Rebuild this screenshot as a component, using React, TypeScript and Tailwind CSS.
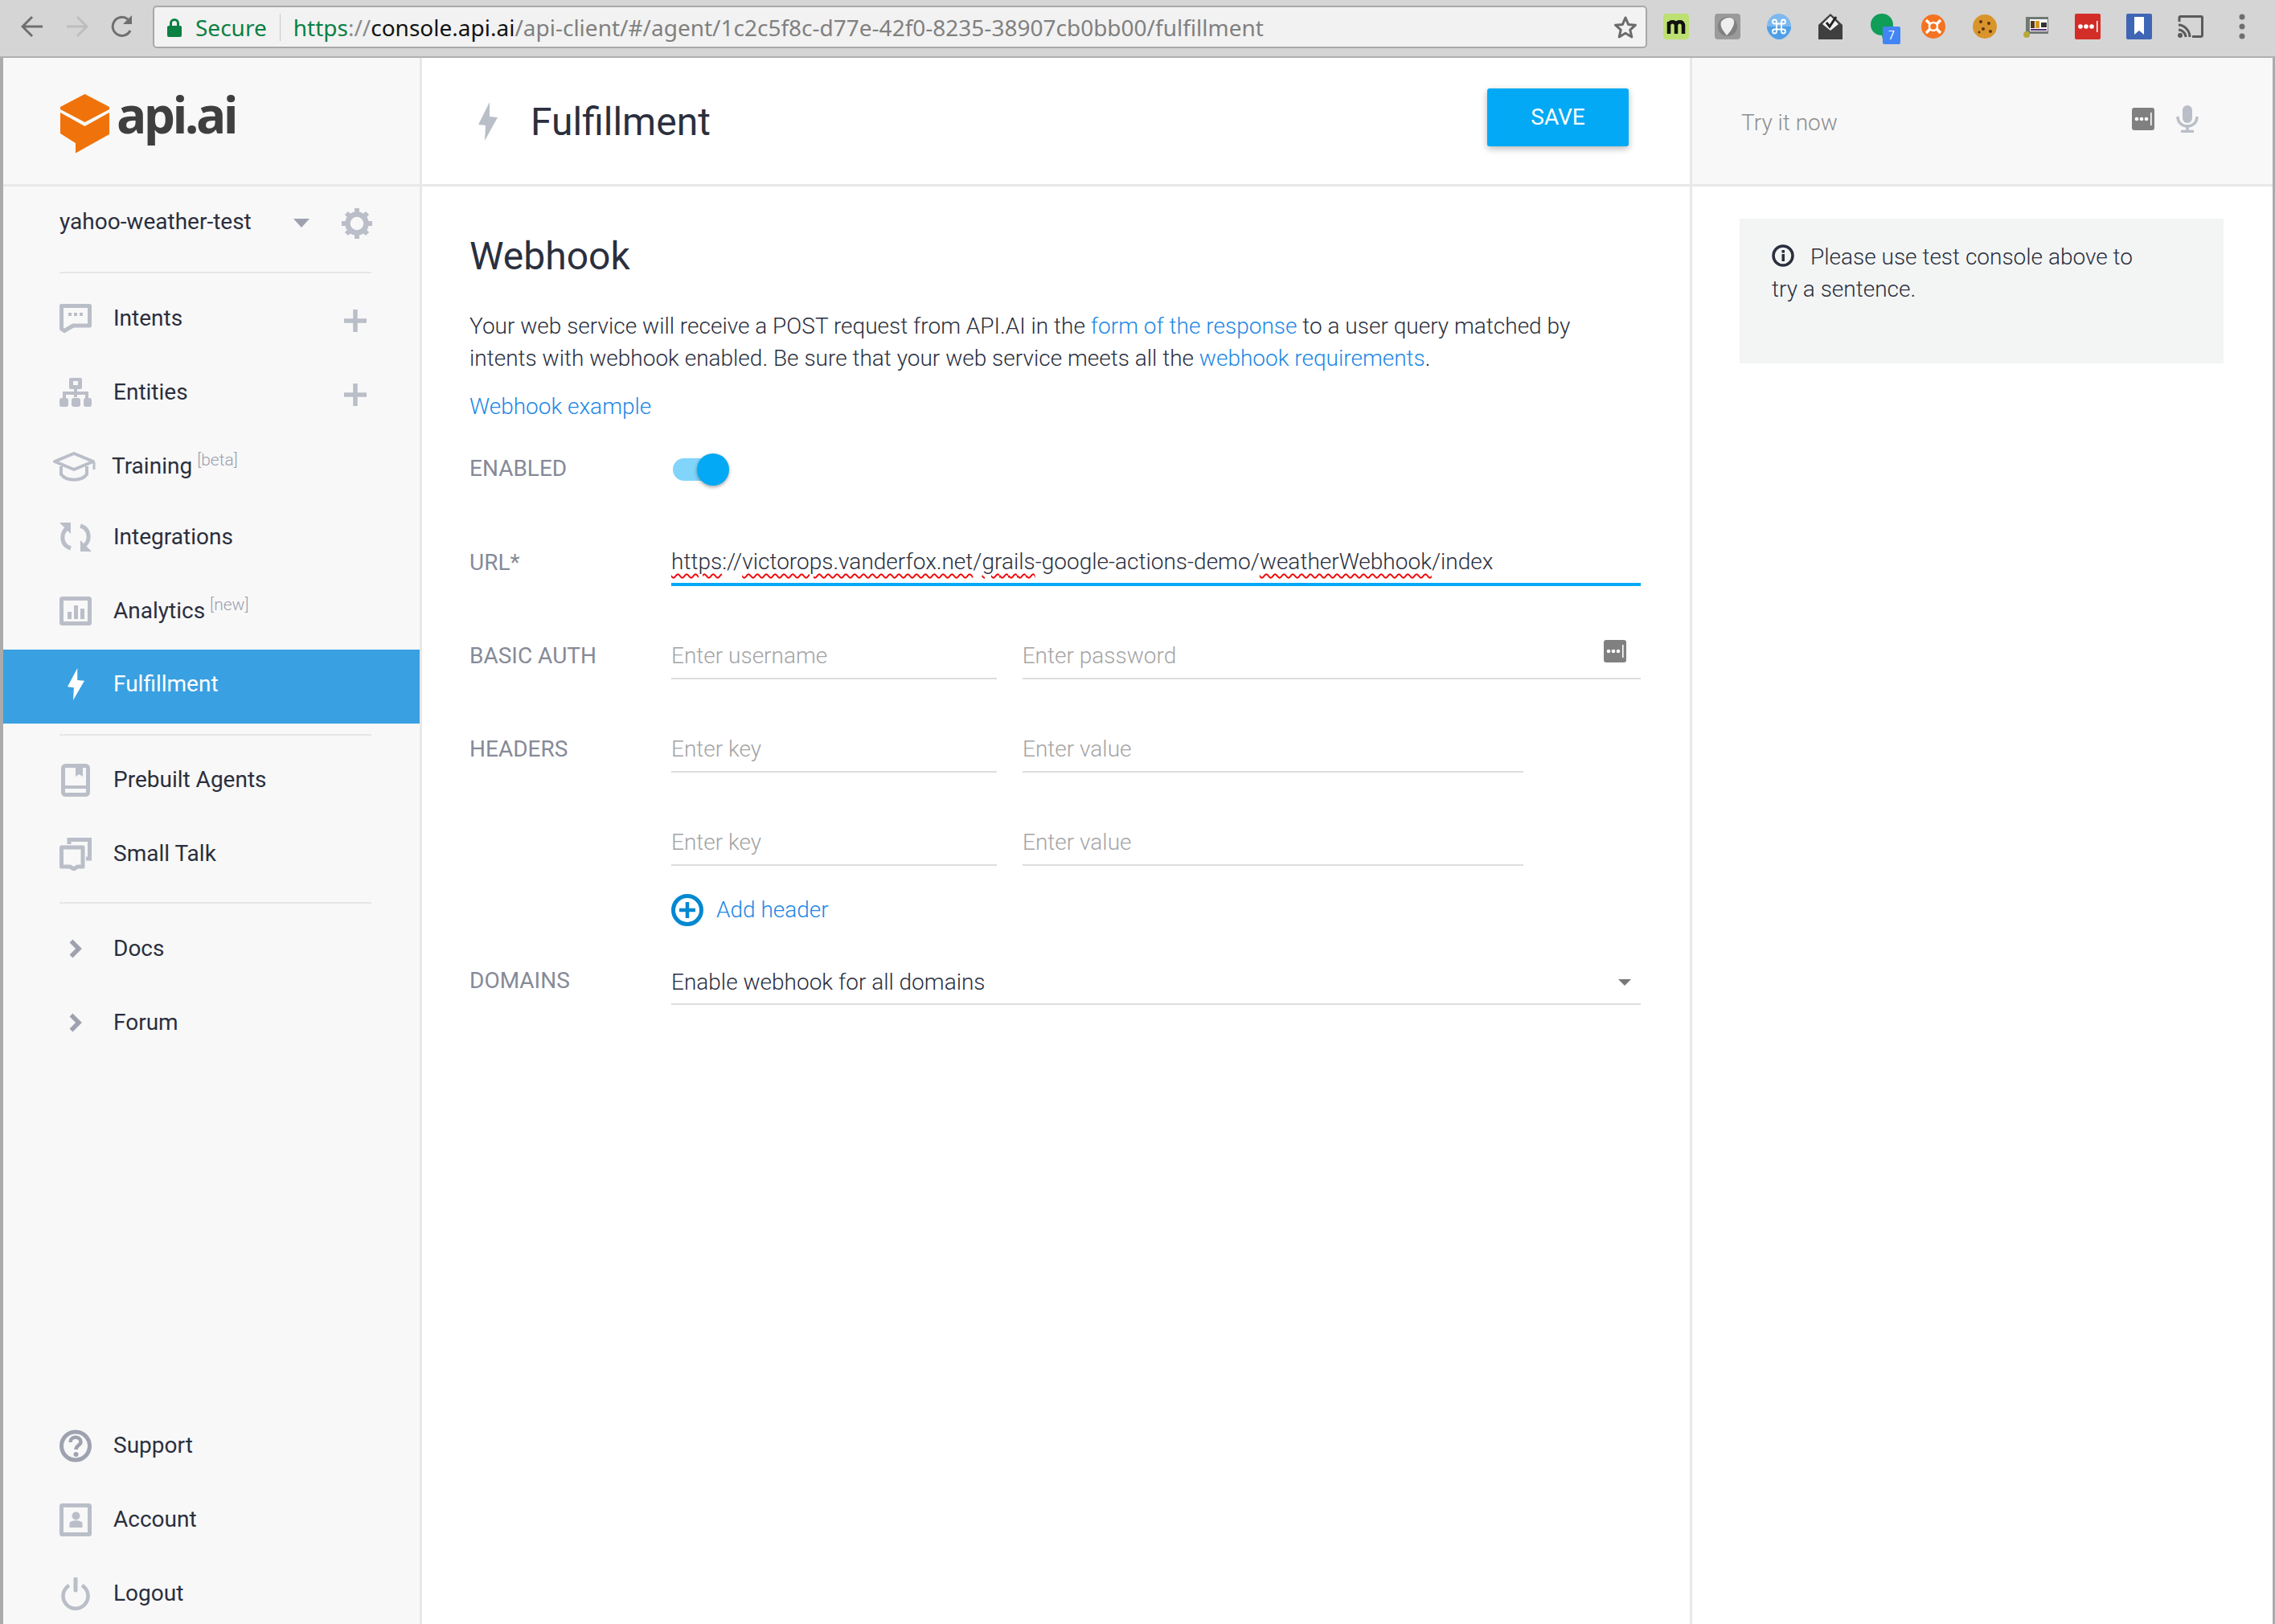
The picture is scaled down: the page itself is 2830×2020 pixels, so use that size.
import React from "react";

const ICON = "#babec8";
const Bolt = ({ c, w = 21, h = 40 }: { c: string; w?: number; h?: number }) => (
  <svg width={w} height={h} viewBox="0 0 24 48" preserveAspectRatio="none"><path d="M14 0 L0 28 L9 29 L8 48 L24 19 L14 18 Z" fill={c} /></svg>
);
const LastPass = ({ w, h }: { w: number; h: number }) => (
  <svg width={w} height={h} viewBox="0 0 28 28">
    <rect width="28" height="28" rx="3" fill="#808080" />
    <circle cx="6" cy="14" r="2.3" fill="#fff" /><circle cx="12" cy="14" r="2.3" fill="#fff" /><circle cx="18" cy="14" r="2.3" fill="#fff" />
    <rect x="23" y="6" width="1.6" height="16" fill="#fff" />
  </svg>
);
const Svg = ({ w = 40, h = 36, children }: { w?: number; h?: number; children: React.ReactNode }) => (
  <svg className="shrink-0" width={w} height={h} viewBox={`0 0 ${w} ${h}`} fill="none">{children}</svg>
);
const Icons: Record<string, React.ReactNode> = {
  intents: (
    <Svg>
      <path d="M2.5 2.5 H37.5 V27 H17 L6 33.5 L2.5 31 Z" stroke={ICON} strokeWidth="5" strokeLinejoin="round" />
      <rect x="11" y="11" width="4" height="4" fill={ICON} /><rect x="18" y="11" width="4" height="4" fill={ICON} /><rect x="25" y="11" width="4" height="4" fill={ICON} />
    </Svg>
  ),
  entities: (
    <Svg>
      <rect x="12" y="0" width="16" height="14" rx="2" fill={ICON} /><rect x="17" y="4" width="6" height="5" fill="#f8f8f8" />
      <path d="M20 12 V24 M6 26 V19 H34 V26" stroke={ICON} strokeWidth="4" />
      <rect x="0" y="25" width="11" height="11" rx="3" fill={ICON} /><rect x="15" y="25" width="11" height="11" rx="3" fill={ICON} /><rect x="30" y="25" width="10" height="11" rx="3" fill={ICON} />
    </Svg>
  ),
  training: (
    <Svg w={54} h={37}>
      <path d="M27 2 L51 12 L27 22 L3 12 Z" stroke={ICON} strokeWidth="4" strokeLinejoin="round" />
      <path d="M11 18 V28 C18 37 36 37 43 28 V18" stroke={ICON} strokeWidth="4" />
      <path d="M52 13 V22" stroke={ICON} strokeWidth="3" />
    </Svg>
  ),
  integrations: (
    <Svg>
      <path d="M11 6 C1 12 1 28 14 32 M29 30 C39 24 39 8 26 4" stroke={ICON} strokeWidth="5" />
      <path d="M0 0 H14 V14 Z M40 36 H26 V22 Z" fill={ICON} />
    </Svg>
  ),
  analytics: (
    <Svg>
      <rect x="2.5" y="2.5" width="35" height="31" rx="1" stroke={ICON} strokeWidth="5" />
      <rect x="10" y="19" width="5" height="9" fill={ICON} /><rect x="18" y="11" width="5" height="17" fill={ICON} /><rect x="26" y="15" width="5" height="13" fill={ICON} />
    </Svg>
  ),
  book: (
    <Svg w={36} h={41}>
      <rect x="2.5" y="2.5" width="31" height="36" rx="3" stroke={ICON} strokeWidth="5" />
      <path d="M18 2 H27 V16 L22.5 13 L18 16 Z" fill={ICON} />
      <rect x="3" y="27" width="30" height="4" fill={ICON} />
    </Svg>
  ),
  talk: (
    <Svg h={41}>
      <path d="M12 8 V2.5 H37.5 V26 H33" stroke={ICON} strokeWidth="5" />
      <path d="M2.5 12 H29 V36 H22 L18 39 L13 36 H2.5 Z" stroke={ICON} strokeWidth="5" strokeLinejoin="round" />
    </Svg>
  ),
  chev: (
    <Svg w={18} h={26}><path d="M3.5 3.5 L13 13 L3.5 22.5" stroke="#9ea2b0" strokeWidth="5.5" /></Svg>
  ),
  support: (
    <Svg h={41}>
      <circle cx="20" cy="20.5" r="17.5" stroke="#9ea2b0" strokeWidth="5" />
      <path d="M13.5 16 C13.5 7.5 26.5 8 26.5 15.5 C26.5 20 20.5 19.5 20.5 25" stroke="#9ea2b0" strokeWidth="4.5" />
      <circle cx="20.5" cy="31" r="3" fill="#9ea2b0" />
    </Svg>
  ),
  account: (
    <Svg h={41}>
      <rect x="2.5" y="2.5" width="35" height="36" rx="1" stroke={ICON} strokeWidth="5" />
      <circle cx="20.5" cy="15.5" r="5" fill={ICON} />
      <path d="M12.5 30 V25 C12.5 20 28.5 20 28.5 25 V30 Z" fill={ICON} />
    </Svg>
  ),
  logout: (
    <Svg w={36} h={41}>
      <path d="M10 10 A15.5 15.5 0 1 0 26 10" stroke={ICON} strokeWidth="4.5" />
      <path d="M18 2 V16" stroke={ICON} strokeWidth="5" strokeLinecap="round" />
    </Svg>
  ),
};

const Row = ({ icon, label, sup, plus, active, cls = "", shiftIcon }: { icon: React.ReactNode; label: string; sup?: string; plus?: boolean; active?: boolean; cls?: string; shiftIcon?: boolean }) => (
  <div className={`h-[92px] shrink-0 flex items-center pl-[70px] pr-[66px] ${active ? "bg-[#39a0e1] text-white" : "text-[#2b2f3e]"} ${cls}`}>
    <div className={`w-[67px] flex items-center shrink-0 ${shiftIcon ? "-ml-[2px]" : ""}`}>
      <div className="w-[40px] flex justify-center">{icon}</div>
    </div>
    <span className="text-[28px] leading-none">{label}</span>
    {sup && <span className="text-[21px] font-light text-[#9a9fad] ml-[6px] -mt-[14px]">{sup}</span>}
    {plus && (
      <svg className="ml-auto mt-[6px]" width="28" height="28" viewBox="0 0 28 28"><path d="M14 0 V28 M0 14 H28" stroke={ICON} strokeWidth="5.5" /></svg>
    )}
  </div>
);
const Divider = ({ cls }: { cls: string }) => <div className={`h-[2px] shrink-0 bg-[#e6e6e6] ml-[70px] w-[388px] ${cls}`} />;

const Label = ({ children, cls = "" }: { children: React.ReactNode; cls?: string }) => (
  <div className={`w-[251px] shrink-0 text-[28px] font-normal text-[#868a98] leading-none ${cls}`}>{children}</div>
);
const Field = ({ text, cls, children }: { text: string; cls: string; children?: React.ReactNode }) => (
  <div className={`h-[58px] pt-[2px] border-b-2 border-[#dddddd] flex items-center text-[28px] font-light text-[#a4a4a4] leading-none ${cls}`}>{text}{children}</div>
);
const Err = ({ children }: { children: React.ReactNode }) => (
  <span className="underline decoration-wavy decoration-[#f00000] decoration-[1.5px] underline-offset-[5px]">{children}</span>
);
const A = ({ children }: { children: React.ReactNode }) => <span className="text-[#1e88e5]">{children}</span>;

const Ext = ({ children, cls = "" }: { children: React.ReactNode; cls?: string }) => (
  <div className={`w-[64px] h-[40px] flex justify-center items-center shrink-0 ${cls}`}>{children}</div>
);

export default function App() {
  return (
    <div className="w-[2830px] h-[2020px] overflow-hidden flex flex-col bg-white font-['Roboto',sans-serif]">
      {/* browser toolbar */}
      <div className="h-[72px] shrink-0 bg-[#d5d5d5] border-b-2 border-[#b0b0b0] flex items-start pl-[4px]">
        <div className="flex items-center h-[70px] pb-[4px] pl-[22px] gap-[28px] w-[186px] shrink-0">
          <svg width="28" height="30" viewBox="0 0 28 30" fill="none"><path d="M27 15 H3 M14 3 L2 15 L14 27" stroke="#6f6f6f" strokeWidth="3" /></svg>
          <svg width="28" height="30" viewBox="0 0 28 30" fill="none"><path d="M1 15 H25 M14 3 L26 15 L14 27" stroke="#bdbdbd" strokeWidth="3" /></svg>
          <svg width="28" height="30" viewBox="0 0 28 30" fill="none"><path d="M24 20 A11.5 11.5 0 1 1 21 6" stroke="#6f6f6f" strokeWidth="3" /><path d="M26 1 V12 H15 Z" fill="#6f6f6f" /></svg>
        </div>
        <div className="mt-[7px] w-[1859px] h-[53px] shrink-0 bg-[#f2f2f2] border-2 border-[#a8a8a8] rounded-[5px] flex items-center pl-[16px] pr-[10px] font-['Noto_Sans',sans-serif] text-[28px] leading-none">
          <svg width="18" height="24" viewBox="0 0 18 24" fill="none"><path d="M4.5 11 V7 C4.5 1 13.5 1 13.5 7 V11" stroke="#0b8043" strokeWidth="3" /><rect x="0" y="10" width="18" height="14" rx="2" fill="#0b8043" /></svg>
          <span className="text-[#0b8043] ml-[17px]">Secure</span>
          <div className="w-[1px] h-[34px] bg-[#c8c8c8] mx-[16px]" />
          <span className="text-[#0b8043]">https</span>
          <span className="text-[#8a8a8a]">://</span>
          <span className="text-[#111]">console.api.ai</span>
          <span className="text-[#808080]">/api-client/#/agent/1c2c5f8c-d77e-42f0-8235-38907cb0bb00/fulfillment</span>
          <svg className="ml-auto" width="30" height="30" viewBox="0 0 30 30" fill="none"><path d="M15 3 L18.6 11.4 L27.5 12.2 L20.8 18.2 L22.8 27 L15 22.3 L7.2 27 L9.2 18.2 L2.5 12.2 L11.4 11.4 Z" stroke="#6a6a6a" strokeWidth="3" strokeLinejoin="round" /></svg>
        </div>
        <div className="flex items-center h-[70px] pb-[4px] pl-[4px]">
          <Ext>
            <svg width="32" height="32" viewBox="0 0 32 32"><rect width="32" height="32" rx="4" fill="#bde070" /><path d="M7 25 V10 M7 14 C8 9 15 9 16 14 V25 M16 14 C17 9 24 9 25 14 V25" stroke="#111" strokeWidth="4.5" fill="none" /></svg>
          </Ext>
          <Ext>
            <svg width="32" height="32" viewBox="0 0 32 32"><rect width="32" height="32" rx="4" fill="#9a9a9a" /><circle cx="16" cy="16" r="12" fill="#808080" /><path d="M8 10 C14 2 26 4 24 12 C23 18 18 24 15 27 C11 22 6 16 8 10 Z" fill="#eeeeee" /></svg>
          </Ext>
          <Ext>
            <svg width="30" height="32" viewBox="0 0 30 32"><ellipse cx="15" cy="16" rx="15" ry="16" fill="#7db9ee" /><path d="M0 16 H30 V18 C28 26 20 32 15 32 C10 32 2 26 0 18 Z" fill="#4f9fe6" /><path d="M12 13 V10 a2.5 2.5 0 1 0 -2.5 2.5 H20.5 a2.5 2.5 0 1 0 -2.5 -2.5 V22 a2.5 2.5 0 1 0 2.5 -2.5 H9.5 a2.5 2.5 0 1 0 2.5 2.5 Z" stroke="#fff" strokeWidth="1.8" fill="none" /></svg>
          </Ext>
          <Ext>
            <svg width="30" height="32" viewBox="0 0 30 32"><path d="M0 14 L15 0 L30 14 V32 H0 Z" fill="#3f3f3f" /><path d="M5 13 L15 3 L25 13 L15 21 Z" fill="#f1f1f1" /><path d="M10 11 L14 16 L22 4" stroke="#222" strokeWidth="3" fill="none" /></svg>
          </Ext>
          <Ext cls="relative">
            <svg width="28" height="32" viewBox="0 0 28 32"><path d="M14 0 C6 0 0 6 0 14 C0 21 6 27 14 27 L15 32 L20 27 C25 24 28 20 28 14 C28 6 22 0 14 0 Z" fill="#0f9d58" /></svg>
            <span className="absolute left-[33px] top-[20px] w-[22px] h-[22px] bg-[#4285f4] rounded-[2px] text-white text-[14px] leading-[22px] text-center">7</span>
          </Ext>
          <Ext>
            <svg width="30" height="30" viewBox="0 0 30 30"><circle cx="15" cy="15" r="15" fill="#f47321" /><circle cx="15" cy="15" r="5" fill="none" stroke="#fff" strokeWidth="2.5" /><path d="M6 7 L11 12 M24 7 L19 12 M6 23 L11 18 M24 23 L19 18" stroke="#fff" strokeWidth="3.5" /></svg>
          </Ext>
          <Ext>
            <svg width="30" height="30" viewBox="0 0 30 30"><circle cx="15" cy="15" r="15" fill="#d9952c" /><circle cx="10" cy="9" r="2" fill="#5a3416" /><circle cx="20" cy="11" r="2" fill="#5a3416" /><circle cx="13" cy="18" r="2" fill="#5a3416" /><circle cx="22" cy="21" r="2" fill="#5a3416" /><circle cx="8" cy="22" r="1.5" fill="#5a3416" /></svg>
          </Ext>
          <Ext>
            <svg width="32" height="30" viewBox="0 0 32 30"><rect x="3" y="3" width="28" height="21" fill="#6f7a73" /><rect x="8" y="6" width="22" height="15" fill="#fff" /><rect x="9" y="8" width="5" height="9" fill="#5a3a1a" /><rect x="15" y="8" width="5" height="9" fill="#d09a20" /><rect x="22" y="10" width="7" height="6" fill="#333" /><rect x="9" y="18" width="20" height="2" fill="#54307a" /><circle cx="4" cy="25" r="4" fill="#b7a83a" /></svg>
          </Ext>
          <Ext>
            <svg width="32" height="32" viewBox="0 0 32 32"><rect width="32" height="32" rx="2" fill="#d32d27" /><circle cx="7" cy="16" r="2.8" fill="#fff" /><circle cx="14" cy="16" r="2.8" fill="#fff" /><circle cx="21" cy="16" r="2.8" fill="#fff" /><rect x="27" y="9" width="1.5" height="14" fill="#fff" /></svg>
          </Ext>
          <Ext>
            <svg width="32" height="32" viewBox="0 0 32 32"><rect width="32" height="32" rx="2" fill="#3f65b5" /><path d="M10 4 H22 V26 L16 21 L10 26 Z" fill="#fff" /></svg>
          </Ext>
          <Ext>
            <svg width="32" height="28" viewBox="0 0 32 28" fill="none"><path d="M2 8 V3 a1.5 1.5 0 0 1 1.5 -1.5 H29 a1.5 1.5 0 0 1 1.5 1.5 V25 a1.5 1.5 0 0 1 -1.5 1.5 H18" stroke="#5a5a5a" strokeWidth="3" /><path d="M1 12 C8 12 15 19 15 27 M1 18 C5 18 10 22 10 27" stroke="#5a5a5a" strokeWidth="3" /><circle cx="3" cy="25" r="3" fill="#5a5a5a" /></svg>
          </Ext>
          <Ext>
            <svg width="8" height="32" viewBox="0 0 8 32"><circle cx="4" cy="4" r="3.5" fill="#6e6e6e" /><circle cx="4" cy="16" r="3.5" fill="#6e6e6e" /><circle cx="4" cy="28" r="3.5" fill="#6e6e6e" /></svg>
          </Ext>
        </div>
      </div>

      <div className="flex-1 min-h-0 flex border-l-[4px] border-r-[3px] border-[#ababab]">
        {/* sidebar */}
        <div className="w-[521px] shrink-0 bg-[#f8f8f8] border-r-[3px] border-[#e8e8e8] flex flex-col">
          <div className="h-[160px] shrink-0 border-b-[3px] border-[#e8e8e8] flex items-center pl-[71px] pt-[6px]">
            <svg width="62" height="74" viewBox="0 0 62 74"><path d="M30.5 0 L61 16 V19 L30.5 35 L0 19 V16 Z" fill="#f0720a" /><path d="M0 23 L30.5 40 L61 23 V50 L19 73.5 V61 L0 49 Z" fill="#f0720a" /></svg>
            <span className="ml-[8px] font-['Open_Sans',sans-serif] font-bold text-[#3f3f3f] text-[62px] leading-none tracking-[-3.6px] -mt-[23px]">api.ai</span>
          </div>
          <div className="h-[106px] shrink-0 flex items-start pl-[70px] pr-[58px] pt-[27px] text-[#2b2f3e]">
            <span className="text-[28px] leading-[34px]">yahoo-weather-test</span>
            <svg className="ml-[52px] mt-[13px]" width="20" height="11" viewBox="0 0 20 11"><path d="M0 0 H20 L10 11 Z" fill="#9ea2b0" /></svg>
            <svg className="ml-auto -mt-[2px]" width="40" height="42" viewBox="0 0 40 42" fill="none"><circle cx="20" cy="21" r="11.5" stroke={ICON} strokeWidth="6.5" /><path d="M20 2 V8 M20 34 V40 M7 8 L11 12 M29 30 L33 34 M7 34 L11 30 M29 12 L33 8 M1 21 H7 M33 21 H39" stroke={ICON} strokeWidth="6" /></svg>
          </div>
          <Divider cls="" />
          <div className="h-[10px] shrink-0" />
          <Row icon={Icons.intents} label="Intents" plus />
          <Row icon={Icons.entities} label="Entities" plus />
          <Row icon={Icons.training} label="Training" sup="[beta]" shiftIcon cls="-mb-[4px]" />
          <Row icon={Icons.integrations} label="Integrations" />
          <Row icon={Icons.analytics} label="Analytics" sup="[new]" />
          <Row icon={<Bolt c="#ffffff" />} label="Fulfillment" active cls="mt-[2px] pb-[6px]" />
          <Divider cls="mt-[13px]" />
          <div className="h-[9px] shrink-0" />
          <Row icon={Icons.book} label="Prebuilt Agents" />
          <Row icon={Icons.talk} label="Small Talk" />
          <Divider cls="mt-[14px]" />
          <div className="h-[10px] shrink-0" />
          <Row icon={Icons.chev} label="Docs" />
          <Row icon={Icons.chev} label="Forum" />
          <div className="mt-auto shrink-0 -mb-[8px]">
            <Row icon={Icons.support} label="Support" />
            <Row icon={Icons.account} label="Account" />
            <Row icon={Icons.logout} label="Logout" />
          </div>
        </div>

        {/* main */}
        <div className="w-[1577px] shrink-0 flex flex-col">
          <div className="h-[160px] shrink-0 border-b-[3px] border-[#e8e8e8] flex items-center pl-[70px] pr-[76px]">
            <Bolt c={ICON} w={24} h={48} />
            <h1 className="ml-[41px] mt-[3px] text-[48px] font-normal leading-none text-[#2b2f3e]">Fulfillment</h1>
            <div className="ml-auto h-[72px] w-[176px] mb-[10px] bg-[#03a9f4] rounded-[3px] shadow-[0_3px_8px_rgba(0,0,0,0.28)] flex items-center justify-center text-white text-[28px]">SAVE</div>
          </div>
          <div className="pl-[59px] pr-[61px] text-[#2b2f3e]">
            <h2 className="mt-[63px] text-[48px] font-normal leading-none">Webhook</h2>
            <p className="mt-[43px] text-[28px] font-light leading-[40px]">
              Your web service will receive a POST request from API.AI in the <A>form of the response</A> to a user query matched by<br />
              intents with webhook enabled. Be sure that your web service meets all the <A>webhook requirements</A>.
            </p>
            <div className="mt-[20px] text-[28px] font-light leading-[40px]"><A>Webhook example</A></div>
            <div className="mt-[38px] h-[40px] flex items-center">
              <Label cls="-mt-[2px]">ENABLED</Label>
              <div className="ml-[2px] w-[70px] h-[40px] relative flex items-center">
                <div className="w-[54px] h-[28px] rounded-full bg-[#81d4fa]" />
                <div className="absolute right-0 top-0 w-[40px] h-[40px] rounded-full bg-[#03a9f4] shadow-[0_2px_4px_rgba(0,0,0,0.35)]" />
              </div>
            </div>
            <div className="mt-[59px] flex items-start">
              <Label cls="pt-[23px]">URL*</Label>
              <div className="w-[1207px] h-[66px] border-b-[4px] border-[#03a9f4] flex items-center pt-[10px] text-[28px] font-light leading-none whitespace-pre">
                <Err>https</Err>://<Err>victorops.vanderfox.net</Err>/<Err>grails</Err>-google-actions-demo/<Err>weatherWebhook</Err>/index
              </div>
            </div>
            <div className="mt-[57px] flex items-center h-[60px]">
              <Label>BASIC AUTH</Label>
              <Field text="Enter username" cls="w-[405px]" />
              <div className="w-[32px]" />
              <Field text="Enter password" cls="w-[770px] relative">
                <div className="absolute right-[18px] top-[9px]"><LastPass w={28} h={28} /></div>
              </Field>
            </div>
            <div className="mt-[56px] flex items-center h-[60px]">
              <Label>HEADERS</Label>
              <Field text="Enter key" cls="w-[405px]" />
              <div className="w-[32px]" />
              <Field text="Enter value" cls="w-[623px]" />
            </div>
            <div className="mt-[56px] flex items-center h-[60px]">
              <Label>{""}</Label>
              <Field text="Enter key" cls="w-[405px]" />
              <div className="w-[32px]" />
              <Field text="Enter value" cls="w-[623px]" />
            </div>
            <div className="mt-[34px] flex items-center h-[40px]">
              <Label>{""}</Label>
              <svg width="40" height="40" viewBox="0 0 40 40" fill="none"><circle cx="20" cy="20" r="17.5" stroke="#0288d1" strokeWidth="5" /><path d="M20 10 V30 M10 20 H30" stroke="#0288d1" strokeWidth="4.5" /></svg>
              <span className="ml-[16px] text-[28px] font-light leading-none"><A>Add header</A></span>
            </div>
            <div className="mt-[40px] flex items-center h-[58px] relative">
              <Label cls="-mt-[3px]">DOMAINS</Label>
              <div className="w-[1207px] h-[58px] pt-[3px] border-b-2 border-[#dddddd] flex items-center justify-between pr-[12px] text-[28px] font-light text-[#2b2f3e] leading-none">
                <span>Enable webhook for all domains</span>
                <svg width="16" height="8" viewBox="0 0 16 8"><path d="M0 0 H16 L8 8 Z" fill="#777" /></svg>
              </div>
            </div>
          </div>
        </div>

        {/* right */}
        <div className="flex-1 min-w-0 border-l-[3px] border-[#e8e8e8] flex flex-col">
          <div className="h-[160px] shrink-0 bg-[#f8f8f8] border-b-[3px] border-[#e8e8e8] flex items-center pl-[61px] pr-[92px]">
            <span className="text-[28px] font-light text-[#8e8e8e] leading-none mt-[4px]">Try it now</span>
            <div className="ml-auto mb-[6px]"><LastPass w={28} h={28} /></div>
            <svg className="ml-[27px] mb-[6px]" width="28" height="34" viewBox="0 0 28 34" fill="none"><rect x="8" y="0" width="12" height="22" rx="6" fill={ICON} /><path d="M2 14 C2 30 26 30 26 14" stroke={ICON} strokeWidth="3.5" /><path d="M14 26 V32 M6 32.5 H22" stroke={ICON} strokeWidth="3.5" /></svg>
          </div>
          <div className="ml-[59px] mr-[61px] mt-[40px] h-[180px] bg-[#f3f5f5] px-[40px] pt-[28px] text-[28px] font-light leading-[40px] text-[#2b2f3e]">
            <svg className="inline-block align-[-3px] mr-[20px]" width="28" height="28" viewBox="0 0 28 28" fill="none"><circle cx="14" cy="14" r="12" stroke="#2b2f3e" strokeWidth="3.5" /><rect x="12.5" y="12" width="3.5" height="9" fill="#2b2f3e" /><rect x="12.5" y="7" width="3.5" height="3.5" fill="#2b2f3e" /></svg>
            Please use test console above to<br />try a sentence.
          </div>
        </div>
      </div>
    </div>
  );
}
